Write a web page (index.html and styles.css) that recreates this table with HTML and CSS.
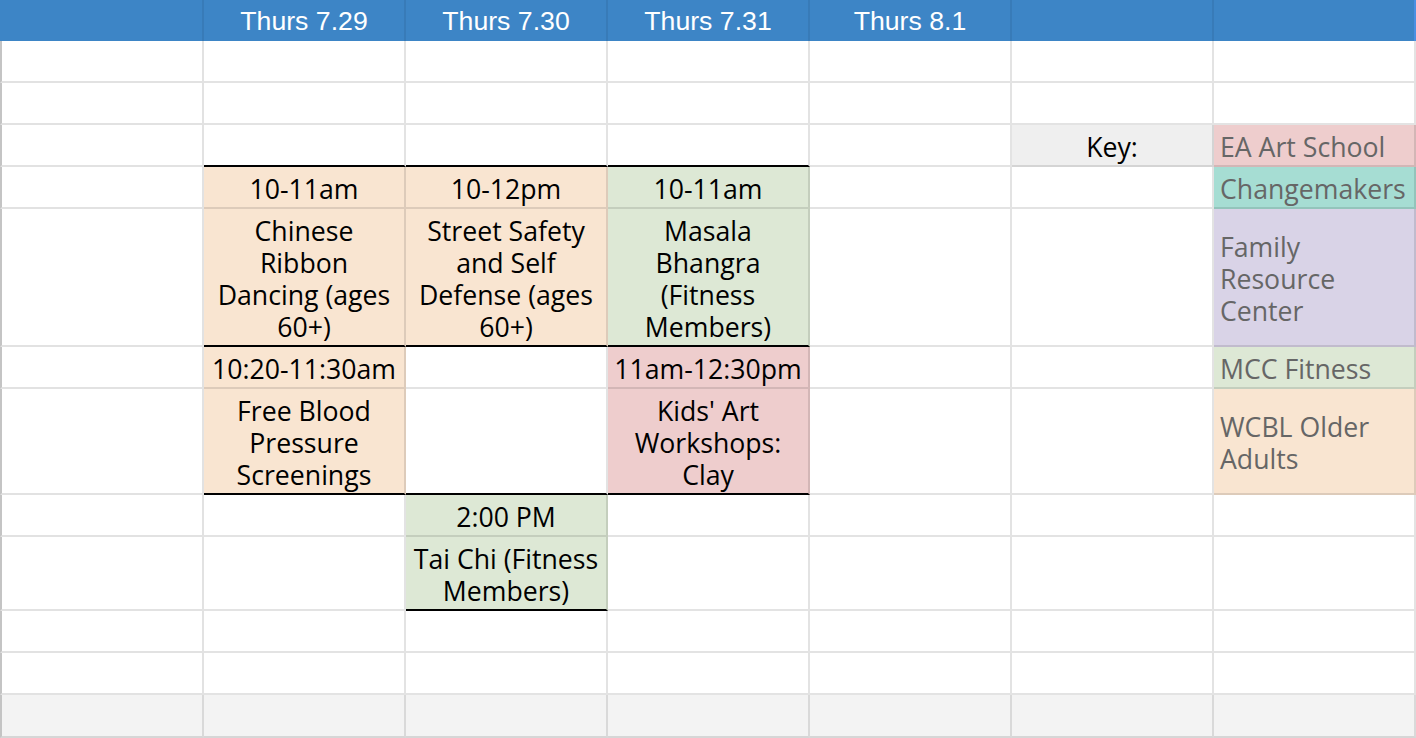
FILE: index.html
```html
<!DOCTYPE html>
<html>
<head>
<meta charset="utf-8">
<link rel="stylesheet" href="styles.css">
</head>
<body>
<div class="sheet">
  <!-- header -->
  <div class="c c0 h"></div>
  <div class="c h">Thurs 7.29</div>
  <div class="c h">Thurs 7.30</div>
  <div class="c h">Thurs 7.31</div>
  <div class="c h">Thurs 8.1</div>
  <div class="c h"></div>
  <div class="c h hl"></div>
  <!-- r1 -->
  <div class="c c0"></div><div class="c"></div><div class="c"></div><div class="c"></div><div class="c"></div><div class="c"></div><div class="c"></div>
  <!-- r2 -->
  <div class="c c0"></div><div class="c"></div><div class="c"></div><div class="c"></div><div class="c"></div><div class="c"></div><div class="c"></div>
  <!-- r3 -->
  <div class="c c0"></div>
  <div class="c bb"></div>
  <div class="c bb"></div>
  <div class="c bb"></div>
  <div class="c"></div>
  <div class="c keylabel">Key:</div>
  <div class="c k pink">EA Art School</div>
  <!-- r4 -->
  <div class="c c0"></div>
  <div class="c orange">10-11am</div>
  <div class="c orange">10-12pm</div>
  <div class="c green">10-11am</div>
  <div class="c"></div>
  <div class="c"></div>
  <div class="c k teal">Changemakers</div>
  <!-- r5 -->
  <div class="c c0"></div>
  <div class="c orange bb">Chinese<br>Ribbon<br>Dancing (ages<br>60+)</div>
  <div class="c orange bb">Street Safety<br>and Self<br>Defense (ages<br>60+)</div>
  <div class="c green bb">Masala<br>Bhangra<br>(Fitness<br>Members)</div>
  <div class="c"></div>
  <div class="c"></div>
  <div class="c k purple">Family<br>Resource<br>Center</div>
  <!-- r6 -->
  <div class="c c0"></div>
  <div class="c orange">10:20-11:30am</div>
  <div class="c"></div>
  <div class="c pink">11am-12:30pm</div>
  <div class="c"></div>
  <div class="c"></div>
  <div class="c k green">MCC Fitness</div>
  <!-- r7 -->
  <div class="c c0"></div>
  <div class="c orange bb">Free Blood<br>Pressure<br>Screenings</div>
  <div class="c bb"></div>
  <div class="c pink bb">Kids' Art<br>Workshops:<br>Clay</div>
  <div class="c"></div>
  <div class="c"></div>
  <div class="c k orange">WCBL Older<br>Adults</div>
  <!-- r8 -->
  <div class="c c0"></div>
  <div class="c"></div>
  <div class="c green">2:00 PM</div>
  <div class="c"></div>
  <div class="c"></div>
  <div class="c"></div>
  <div class="c"></div>
  <!-- r9 -->
  <div class="c c0"></div>
  <div class="c"></div>
  <div class="c green bb">Tai Chi (Fitness<br>Members)</div>
  <div class="c"></div>
  <div class="c"></div>
  <div class="c"></div>
  <div class="c"></div>
  <!-- r10 -->
  <div class="c c0"></div><div class="c"></div><div class="c"></div><div class="c"></div><div class="c"></div><div class="c"></div><div class="c"></div>
  <!-- r11 -->
  <div class="c c0"></div><div class="c"></div><div class="c"></div><div class="c"></div><div class="c"></div><div class="c"></div><div class="c"></div>
  <!-- r12 -->
  <div class="c c0 g"></div><div class="c g"></div><div class="c g"></div><div class="c g"></div><div class="c g"></div><div class="c g"></div><div class="c g"></div>
</div>
</body>
</html>
```

FILE: styles.css
```css
html, body {
  margin: 0;
  padding: 0;
  background: #ffffff;
  overflow: hidden;
}

.sheet {
  display: grid;
  grid-template-columns: 204px repeat(6, 202px);
  grid-template-rows: 41px 42px 42px 42px 42px 138px 42px 106px 42px 74px 42px 42px 43px;
  width: 1416px;
  height: 738px;
}

.c {
  box-sizing: border-box;
  border-right: 2px solid rgba(0, 0, 0, 0.11);
  border-bottom: 2px solid rgba(0, 0, 0, 0.11);
  display: flex;
  align-items: center;
  justify-content: center;
  text-align: center;
  font-family: "Open Sans", "Noto Sans", sans-serif;
  font-size: 26.67px;
  line-height: 32px;
  color: #000000;
  white-space: nowrap;
  overflow: hidden;
  padding-top: 4px;
}

.c0 {
  border-left: 2px solid #c4c4c4;
}

.h {
  background: #3d85c6;
  color: #ffffff;
  font-family: "Liberation Sans", Arial, sans-serif;
  border-bottom: none;
  border-right-color: rgba(0, 0, 0, 0.07);
  padding-top: 1px;
}

.h.c0 {
  border-left-color: #3d85c6;
}

.h.hl {
  border-right-color: #4a90e2;
}

.bb {
  border-bottom-color: #000000;
}

.orange { background: #f9e5d1; }
.green  { background: #dde8d5; }
.pink   { background: #eecdcd; }
.purple { background: #d9d3e7; }
.teal   { background: #a6ddd3; }

.keylabel {
  background: #efefef;
}

.k {
  justify-content: flex-start;
  text-align: left;
  padding-left: 6px;
  color: #666666;
}

.g {
  background: #f3f3f3;
  border-bottom-color: #d6d6d6;
  border-right-color: #d9d9d9;
}
```
